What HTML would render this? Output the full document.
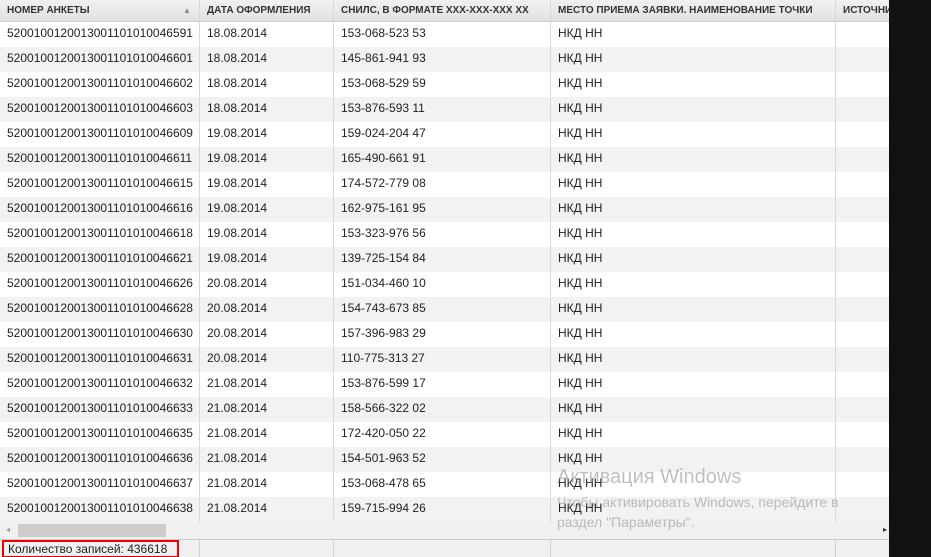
<!DOCTYPE html>
<html><head><meta charset="utf-8"><style>
*{margin:0;padding:0;box-sizing:border-box}
body{width:931px;height:557px;overflow:hidden;background:#111;font-family:"Liberation Sans",Arial,sans-serif;position:relative}
#g{position:absolute;left:0;top:0;width:889px;height:557px;background:#fff;overflow:hidden}
.hd{position:absolute;left:0;top:0;width:889px;height:22px;background:linear-gradient(#f0f0f0,#e2e2e2);border-bottom:1px solid #cfcfcf}
.hd div{position:absolute;top:0;height:22px;line-height:22px;font-size:10px;font-weight:bold;color:#333;padding-left:7px;white-space:nowrap;overflow:hidden}
.r{position:absolute;left:0;width:889px;height:25px;font-size:12px;color:#222;line-height:22px}
.r.a{background:#f2f2f2}
.r span{position:absolute;top:0;white-space:nowrap}
.vl{position:absolute;top:0;width:1px;height:539px;background:#d8d8d8}
.sb{position:absolute;left:0;top:522px;width:889px;height:17px;background:#f0f0f0}
.ft{position:absolute;left:0;top:539px;width:889px;height:18px;background:#f0f0f0;border-top:1px solid #ccc}
.wm{position:absolute;color:rgba(130,130,130,.5);font-family:"Liberation Sans",sans-serif;white-space:nowrap}
</style></head><body>
<div id="g">
<div class="hd">
<div style="left:0;width:200px">НОМЕР АНКЕТЫ<span style="position:absolute;left:183px;font-size:8px;color:#888">▲</span></div>
<div style="left:200px;width:134px">ДАТА ОФОРМЛЕНИЯ</div>
<div style="left:334px;width:217px">СНИЛС, В ФОРМАТЕ XXX-XXX-XXX XX</div>
<div style="left:551px;width:285px">МЕСТО ПРИЕМА ЗАЯВКИ. НАИМЕНОВАНИЕ ТОЧКИ</div>
<div style="left:836px;width:60px">ИСТОЧНИК</div>
</div>
<div id="rows"></div>
<div class="vl" style="left:199px"></div><div class="vl" style="left:333px"></div><div class="vl" style="left:550px"></div><div class="vl" style="left:835px"></div>
<div class="sb"><span style="position:absolute;left:6px;top:3px;font-size:8px;color:#999">◂</span><div style="position:absolute;left:18px;top:2px;width:148px;height:13px;background:#cdcdcd"></div><span style="position:absolute;left:883px;top:3px;font-size:8px;color:#333">▸</span></div>
<div class="ft"><div style="position:absolute;left:2px;top:0;width:177px;height:18px;border:2px solid #e00;font-size:12px;line-height:14px;padding-left:4px;color:#222">Количество записей: 436618</div>
<div style="position:absolute;left:199px;top:0;width:1px;height:18px;background:#d0d0d0"></div><div style="position:absolute;left:333px;top:0;width:1px;height:18px;background:#d0d0d0"></div><div style="position:absolute;left:550px;top:0;width:1px;height:18px;background:#d0d0d0"></div><div style="position:absolute;left:835px;top:0;width:1px;height:18px;background:#d0d0d0"></div></div>
<div class="wm" style="left:557px;top:466px;font-size:20px">Активация Windows</div>
<div class="wm" style="left:557px;top:492px;font-size:14px;line-height:20px">Чтобы активировать Windows, перейдите в<br>раздел "Параметры".</div>
</div>
<script>
var d=[["46591","18.08.2014","153-068-523 53"],["46601","18.08.2014","145-861-941 93"],["46602","18.08.2014","153-068-529 59"],["46603","18.08.2014","153-876-593 11"],["46609","19.08.2014","159-024-204 47"],["46611","19.08.2014","165-490-661 91"],["46615","19.08.2014","174-572-779 08"],["46616","19.08.2014","162-975-161 95"],["46618","19.08.2014","153-323-976 56"],["46621","19.08.2014","139-725-154 84"],["46626","20.08.2014","151-034-460 10"],["46628","20.08.2014","154-743-673 85"],["46630","20.08.2014","157-396-983 29"],["46631","20.08.2014","110-775-313 27"],["46632","21.08.2014","153-876-599 17"],["46633","21.08.2014","158-566-322 02"],["46635","21.08.2014","172-420-050 22"],["46636","21.08.2014","154-501-963 52"],["46637","21.08.2014","153-068-478 65"],["46638","21.08.2014","159-715-994 26"]];
var h="";d.forEach(function(r,i){h+='<div class="r'+(i%2?' a':'')+'" style="top:'+(22+25*i)+'px"><span style="left:7px">52001001200130011010100'+r[0]+'</span><span style="left:207px">'+r[1]+'</span><span style="left:341px">'+r[2]+'</span><span style="left:558px">НКД НН</span></div>'});
document.getElementById("rows").innerHTML=h;
</script>
</body></html>
